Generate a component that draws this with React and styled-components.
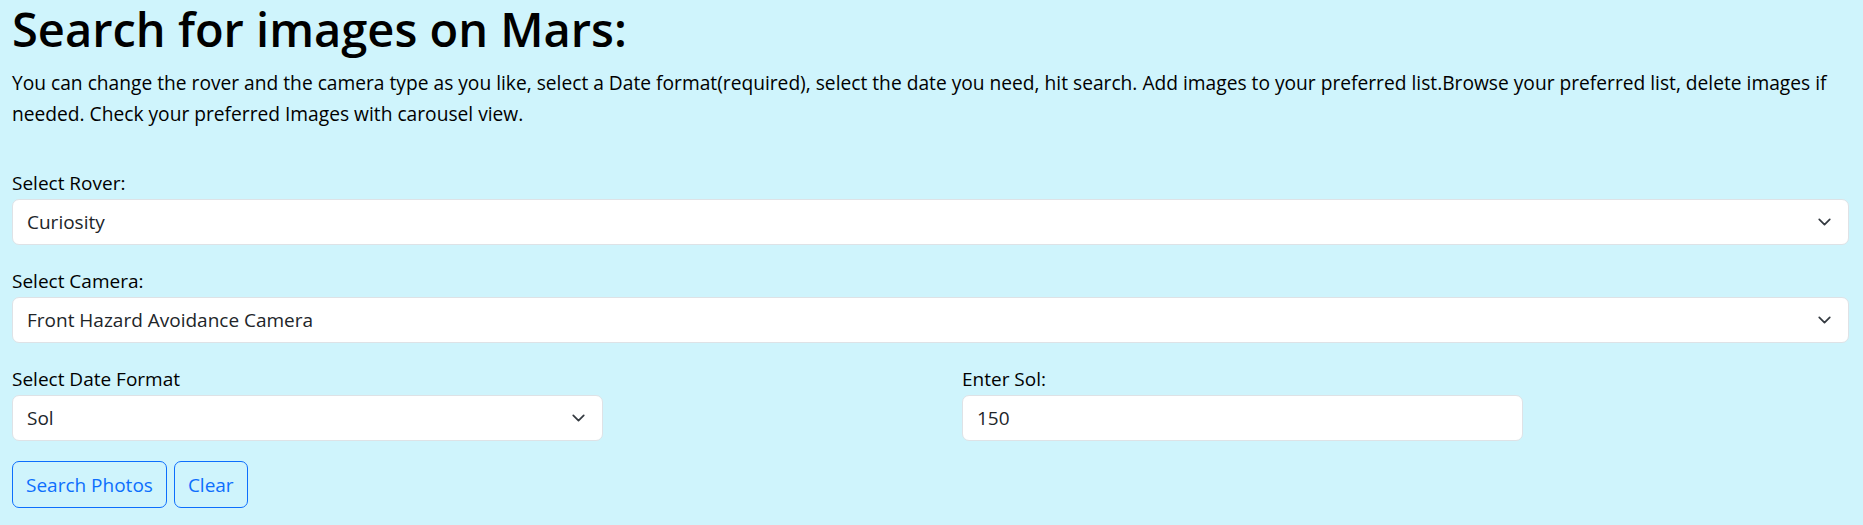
import React, { useState } from "react"
import styled, { createGlobalStyle } from "styled-components"

const GlobalStyle = createGlobalStyle`
  html, body {
    margin: 0;
    background: #cff4fc;
  }
  body {
    font-family: "Open Sans", "Noto Sans", sans-serif;
    color: #212529;
  }
`

const rovers = ["Curiosity", "Opportunity", "Spirit"]
const cameras = [
  "Front Hazard Avoidance Camera",
  "Rear Hazard Avoidance Camera",
  "Mast Camera",
  "Navigation Camera",
]

const App = () => {
  const [rover, setRover] = useState("Curiosity")
  const [camera, setCamera] = useState(cameras[0])
  const [format, setFormat] = useState("Sol")
  const [sol, setSol] = useState("150")

  return (
    <Page>
      <GlobalStyle />
      <Title>Search for images on Mars:</Title>
      <Intro>
        You can change the rover and the camera type as you like, select a Date
        format(required), select the date you need, hit search. Add images to
        your preferred list.Browse your preferred list, delete images if
        needed. Check your preferred Images with carousel view.
      </Intro>

      <Field>
        <Label htmlFor="rover">Select Rover:</Label>
        <Select id="rover" value={rover} onChange={e => setRover(e.target.value)}>
          {rovers.map(r => (
            <option key={r}>{r}</option>
          ))}
        </Select>
      </Field>

      <Field>
        <Label htmlFor="camera">Select Camera:</Label>
        <Select id="camera" value={camera} onChange={e => setCamera(e.target.value)}>
          {cameras.map(c => (
            <option key={c}>{c}</option>
          ))}
        </Select>
      </Field>

      <DateRow>
        <Field>
          <Label htmlFor="format">Select Date Format</Label>
          <Select id="format" value={format} onChange={e => setFormat(e.target.value)}>
            <option>Sol</option>
            <option>Earth Date</option>
          </Select>
        </Field>
        <Field>
          <Label htmlFor="sol">Enter Sol:</Label>
          <Input id="sol" type="text" value={sol} onChange={e => setSol(e.target.value)} />
        </Field>
      </DateRow>

      <Actions>
        <OutlineButton>Search Photos</OutlineButton>
        <OutlineButton>Clear</OutlineButton>
      </Actions>
    </Page>
  )
}

export default App

const Page = styled.div`
  padding: 2px 14px 0 12px;
`

const Title = styled.h1`
  margin: 0 0 10px 0;
  font-size: 47px;
  line-height: 55px;
  font-weight: 600;
  color: #000;
`

const Intro = styled.p`
  margin: 0 0 40px 0;
  font-size: 19.2px;
  line-height: 31px;
  color: #000;
`

const Field = styled.div`
  display: flex;
  flex-direction: column;
  margin-bottom: 22px;
`

const Label = styled.label`
  display: block;
  font-size: 19px;
  line-height: 29px;
  margin-bottom: 1px;
  color: #000;
`

const controlBase = `
  box-sizing: border-box;
  width: 100%;
  height: 46px;
  font-family: "Open Sans", "Noto Sans", sans-serif;
  font-size: 19px;
  color: #212529;
  background-color: #fff;
  border: 1px solid #dee2e6;
  border-radius: 7px;
  outline: none;
`

const Select = styled.select`
  ${controlBase}
  appearance: none;
  padding: 0 44px 0 14px;
  background-image: url("data:image/svg+xml,%3csvg xmlns='http://www.w3.org/2000/svg' viewBox='0 0 16 16'%3e%3cpath fill='none' stroke='%23343a40' stroke-linecap='round' stroke-linejoin='round' stroke-width='2' d='m2 5 6 6 6-6'/%3e%3c/svg%3e");
  background-repeat: no-repeat;
  background-position: right 14px center;
  background-size: 19px 14px;
`

const Input = styled.input`
  ${controlBase}
  padding: 0 14px;
`

const DateRow = styled.div`
  display: grid;
  grid-template-columns: 591px 561px;
  column-gap: 359px;
`

const Actions = styled.div`
  display: flex;
  gap: 7px;
  margin-top: -2px;
`

const OutlineButton = styled.button`
  height: 47px;
  padding: 0 13px;
  font-family: "Open Sans", "Noto Sans", sans-serif;
  font-size: 19px;
  color: #0d6efd;
  background: transparent;
  border: 1px solid #0d6efd;
  border-radius: 7px;
  cursor: pointer;

  &:hover {
    color: #fff;
    background: #0d6efd;
  }
`
